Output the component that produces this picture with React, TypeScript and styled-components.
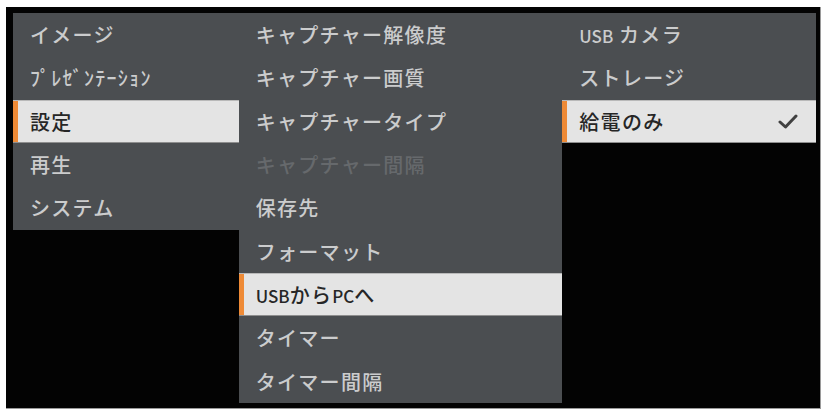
import styled, { createGlobalStyle } from "styled-components";

const GlobalStyle = createGlobalStyle`
  body {
    margin: 0;
    background: #ffffff;
    font-family: "Noto Sans CJK JP", "Noto Sans", sans-serif;
  }
`;

const Page = styled.div`
  width: 826px;
  height: 412px;
  padding: 7px 5px 3px 6px;
  box-sizing: border-box;
`;

const Screen = styled.div`
  display: flex;
  align-items: flex-start;
  height: 100%;
  box-sizing: border-box;
  padding: 6px 4px 0 7px;
  background: #030303;
  border: 1px solid #9a9a9a;
  border-width: 0 1px 1px 0;
`;

const Column = styled.div<{ $width: number }>`
  display: flex;
  flex-direction: column;
  width: ${(p) => p.$width}px;
  background: #4b4e51;
`;

const Row = styled.div<{ $active?: boolean; $disabled?: boolean }>`
  position: relative;
  display: flex;
  align-items: center;
  justify-content: space-between;
  height: 43.33px;
  box-sizing: border-box;
  padding: 0 18px 0 17px;
  font-size: 20px;
  font-weight: 500;
  letter-spacing: 1.3px;
  white-space: nowrap;
  color: ${(p) => (p.$active ? "#262626" : p.$disabled ? "#66696c" : "#cbcccd")};
  background: ${(p) => (p.$active ? "#e4e4e4" : "transparent")};
  border-top: 1px solid ${(p) => (p.$active ? "#b9b9b9" : "transparent")};
  border-bottom: 1px solid ${(p) => (p.$active ? "#8e8e8e" : "transparent")};

  &::before {
    content: "";
    display: ${(p) => (p.$active ? "block" : "none")};
    position: absolute;
    left: 0;
    top: 0;
    bottom: 0;
    width: 5px;
    background: #ee8a36;
  }
`;

const Narrow = styled.span`
  font-size: 17px;
  letter-spacing: 0;
`;

function Check() {
  return (
    <svg width="20" height="15" viewBox="0 0 20 15">
      <polyline
        points="2,8 7.5,13 18,2"
        fill="none"
        stroke="#404040"
        strokeWidth="3"
        strokeLinecap="round"
        strokeLinejoin="round"
      />
    </svg>
  );
}

const mainMenu = ["イメージ", "ﾌﾟﾚｾﾞﾝﾃｰｼｮﾝ", "設定", "再生", "システム"];

const settings = [
  "キャプチャー解像度",
  "キャプチャー画質",
  "キャプチャータイプ",
  "キャプチャー間隔",
  "保存先",
  "フォーマット",
  "USBからPCへ",
  "タイマー",
  "タイマー間隔",
];

function App() {
  return (
    <>
      <GlobalStyle />
      <Page>
        <Screen>
          <Column $width={226}>
            {mainMenu.map((item, i) => (
              <Row key={item} $active={i === 2}>
                {item}
              </Row>
            ))}
          </Column>
          <Column $width={324}>
            {settings.map((item, i) => (
              <Row key={item} $active={i === 6} $disabled={i === 3}>
                {i === 6 ? (
                  <span>
                    <Narrow>USB</Narrow>から<Narrow>PC</Narrow>へ
                  </span>
                ) : (
                  item
                )}
              </Row>
            ))}
          </Column>
          <Column $width={254}>
            <Row>
              <span>
                <Narrow>USB</Narrow> カメラ
              </span>
            </Row>
            <Row>ストレージ</Row>
            <Row $active>
              給電のみ
              <Check />
            </Row>
          </Column>
        </Screen>
      </Page>
    </>
  );
}

export default App;
